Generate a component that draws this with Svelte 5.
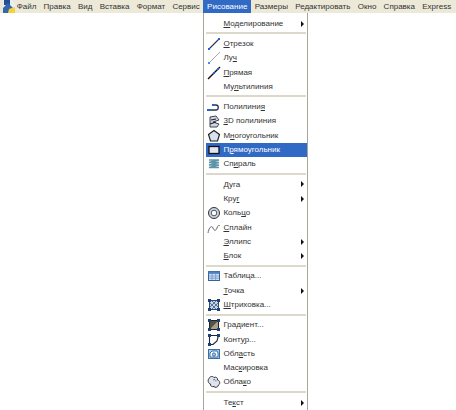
<script>
  const menus = ["Файл", "Правка", "Вид", "Вставка", "Формат", "Сервис"];
  const menusRight = ["Размеры", "Редактировать", "Окно", "Справка", "Express"];

  // each label is split as [before, mnemonic, after]
  const groups = [
    [{ t: ["", "М", "оделирование"], sub: true }],
    [
      { t: ["", "О", "трезок"], icon: "line" },
      { t: ["Лу", "ч", ""], icon: "ray" },
      { t: ["", "П", "рямая"], icon: "xline" },
      { t: ["Му", "л", "ьтилиния"] },
    ],
    [
      { t: ["Полилини", "я", ""], icon: "pline" },
      { t: ["", "3", "D полилиния"], icon: "pline3d" },
      { t: ["М", "н", "огоугольник"], icon: "polygon" },
      { t: ["П", "р", "ямоугольник"], icon: "rect", active: true },
      { t: ["Сп", "и", "раль"], icon: "helix" },
    ],
    [
      { t: ["", "Д", "уга"], sub: true },
      { t: ["Кру", "г", ""], sub: true },
      { t: ["Коль", "ц", "о"], icon: "donut" },
      { t: ["", "С", "плайн"], icon: "spline" },
      { t: ["", "Э", "ллипс"], sub: true },
      { t: ["", "Б", "лок"], sub: true },
    ],
    [
      { t: ["Таблица...", "", ""], icon: "table" },
      { t: ["", "Т", "очка"], sub: true },
      { t: ["", "Ш", "триховка..."], icon: "hatch" },
    ],
    [
      { t: ["Градиент...", "", ""], icon: "gradient" },
      { t: ["Конт", "у", "р..."], icon: "boundary" },
      { t: ["Обл", "а", "сть"], icon: "region" },
      { t: ["Мас", "к", "ировка"] },
      { t: ["Обла", "к", "о"], icon: "cloud" },
    ],
    [{ t: ["Те", "к", "ст"], sub: true }],
  ];
</script>

{#snippet icon(name)}
  <svg class="icon" width="14" height="14" viewBox="0 0 14 14">
    {#if name === "line"}
      <path d="M2 12 12 2" stroke="#2a3450" stroke-width="1.1" />
      <rect x="1" y="11" width="2" height="2" fill="#1c62d8" />
      <rect x="11" y="1" width="2" height="2" fill="#1c62d8" />
    {:else if name === "ray"}
      <path d="M2 12 13 1" stroke="#a5a5a5" />
      <rect x="1" y="11" width="2" height="2" fill="#4a8ae8" />
    {:else if name === "xline"}
      <path d="M1 13 13 1" stroke="#111" stroke-width="1.4" />
      <rect x="6" y="6" width="2" height="2" fill="#1c62d8" />
      <rect x="10" y="2" width="2" height="2" fill="#1c62d8" />
    {:else if name === "pline"}
      <path d="M2 10H9C12 10 12 5 9 5H7" fill="none" stroke="#2a3450" stroke-width="1.3" />
      <rect x="0" y="9" width="3" height="2" fill="#1c62d8" />
      <rect x="5" y="4" width="2" height="2" fill="#1c62d8" />
    {:else if name === "pline3d"}
      <path d="M3 3 9 2 12 6 6 8 12 10 10 13H3Z" fill="#cfd6e0" stroke="#445" />
      <path d="M3 10 9 8M4 6 9 5" stroke="#223" stroke-width="1.2" />
    {:else if name === "polygon"}
      <path d="M7 1.5 12.5 5.5 10.5 12H3.5L1.5 5.5Z" fill="#d8e2ee" stroke="#222" stroke-width="1.2" />
    {:else if name === "rect"}
      <rect x="2" y="3.5" width="10" height="7" fill="#dfe6f2" stroke="#111" stroke-width="1.3" />
    {:else if name === "helix"}
      <path d="M2 3H12L2 5.5H12L2 8H12L2 10.500H12" fill="none" stroke="#5f93a8" stroke-width="1.4" />
    {:else if name === "donut"}
      <circle cx="7" cy="7" r="5.5" fill="#c9d3e0" stroke="#333" />
      <circle cx="7" cy="7" r="2.8" fill="#fff" stroke="#556" />
    {:else if name === "spline"}
      <path d="M1 12C2 6 5 4 6 7S9 10 10 7 12 4 13 5" fill="none" stroke="#667" />
    {:else if name === "table"}
      <rect x="1.5" y="2.5" width="11" height="9" fill="#cfe0f4" stroke="#35639c" />
      <rect x="1.5" y="2.5" width="11" height="2.4" fill="#4f82c4" />
      <path d="M5 5V11M8.700 5V11M2 7H12M2 9.200H12" stroke="#6c95c6" stroke-width=".8" />
    {:else if name === "hatch"}
      <rect x="2.5" y="2.5" width="9" height="9" fill="#c7d4e4" stroke="#2b4a72" />
      <path d="M3 9 9 3M5 11 11 5M3 5 9 11M5 3 11 9" stroke="#4a6c98" stroke-width=".9" />
      <path d="M1 1H4V4H1ZM10 1H13V4H10ZM1 10H4V13H1ZM10 10H13V13H10Z" fill="#1c3f78" />
    {:else if name === "gradient"}
      <rect x="2.5" y="2.5" width="9" height="9" fill="#55524a" stroke="#222" />
      <path d="M3 11 11 3V11Z" fill="#a9a387" />
      <path d="M1 1H4V4H1ZM10 1H13V4H10ZM1 10H4V13H1ZM10 10H13V13H10Z" fill="#1c3f78" />
    {:else if name === "boundary"}
      <path d="M2.5 2.5H11.5L10 8 6 11.5H2.5Z" fill="#fff" stroke="#223" stroke-width="1.1" />
      <path d="M1 1H4V4H1ZM10 1H13V4H10ZM1 10H4V13H1Z" fill="#1c3f78" />
    {:else if name === "region"}
      <rect x="1.5" y="2.5" width="11" height="9" fill="#a9cdea" stroke="#3a6ea5" />
      <path d="M3 10V6L5 4H10L11 6V10Z" fill="#fff" stroke="#3a6ea5" />
      <circle cx="7" cy="7.5" r="1.6" fill="#a9cdea" stroke="#3a6ea5" />
    {:else if name === "cloud"}
      <path d="M2 3.500C3 1 6 1 7 2.500 9 1.500 11 3 10.500 5 13 5.500 13.500 9 11.500 10 11 12.500 8 13 7 11.500 5 12 3 11 3.500 9 1 8.500 .5 5 2 3.500Z" fill="#dfe4ea" stroke="#334" />
      <path d="M6 5C7.500 4 9 5 9 6.500" fill="none" stroke="#778" />
    {/if}
  </svg>
{/snippet}

<div class="page">
  <div class="bar">
    <svg class="logo" width="12" height="13" viewBox="0 0 12 13">
      <path d="M0 0H9L12 4V13H0Z" fill="#e8eef8" />
      <path d="M1 0H7V5H1Z" fill="#24508f" />
      <path d="M0 8 5 3 12 10V13H0Z" fill="#3566a8" />
      <path d="M6 9 12 7V13H5Z" fill="#f5d23a" />
    </svg>
    {#each menus as m}
      <span class="top">{m}</span>
    {/each}
    <div class="top open">
      Рисование
      <div class="menu">
        {#each groups as items, g}
          {#if g > 0}
            <div class="sep"></div>
          {/if}
          {#each items as item}
            <div class="row" class:active={item.active}>
              <span class="slot">
                {#if item.icon}
                  {@render icon(item.icon)}
                {/if}
              </span>
              <span class="label">{item.t[0]}<u>{item.t[1]}</u>{item.t[2]}</span>
              {#if item.sub}
                <span class="arrow"></span>
              {/if}
            </div>
          {/each}
        {/each}
      </div>
    </div>
    {#each menusRight as m}
      <span class="top">{m}</span>
    {/each}
  </div>
</div>

<style>
  .page {
    height: 410px;
    background: #fff;
    overflow: hidden;
  }
  .bar {
    display: flex;
    align-items: center;
    height: 13px;
    background: #ece9d8;
    padding-left: 3px;
    font: 8px "Liberation Sans", Arial, sans-serif;
    color: #333;
  }
  .logo {
    flex: none;
    margin-right: -2px;
  }
  .top {
    padding: 0 3.65px;
    white-space: nowrap;
    line-height: 13px;
  }
  .open {
    position: relative;
    background: #316ac5;
    color: #fff;
  }
  .menu {
    position: absolute;
    top: 13px;
    left: 0;
    width: 105px;
    height: 397px;
    box-sizing: border-box;
    padding-top: 3.5px;
    padding-left: 2px;
    background: #fff;
    border-left: 1px solid #a7a69a;
    border-right: 1px solid #a7a69a;
    color: #333;
  }
  .row {
    display: flex;
    align-items: center;
    height: 14.3px;
    line-height: 14px;
    position: relative;
  }
  .row.active {
    background: #316ac5;
    color: #fff;
  }
  .slot {
    width: 16px;
    flex: none;
    display: flex;
    justify-content: center;
    margin-right: 1px;
  }
  .icon {
    display: block;
  }
  .label {
    white-space: nowrap;
  }
  .arrow {
    position: absolute;
    right: 3px;
    top: 4px;
    border-left: 3.5px solid #111;
    border-top: 3px solid transparent;
    border-bottom: 3px solid transparent;
  }
  .sep {
    height: 2px;
    margin: 1.5px 1px 2.5px 0;
    background: #dcd9cc;
  }
</style>
